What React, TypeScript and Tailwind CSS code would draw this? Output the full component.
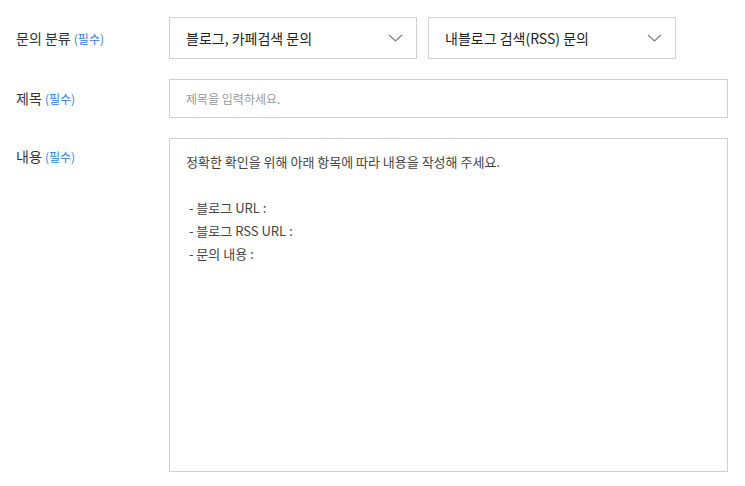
import { ReactNode } from "react";

const font = { fontFamily: '"Noto Sans CJK KR", "Noto Sans", sans-serif' };

function Label({ text, className = "" }: { text: string; className?: string }) {
    return (
        <div className={`w-[153px] shrink-0 text-[14px] text-[#333] ${className}`}>
            {text} <span className="text-[12px] text-[#2f7fe6]">(필수)</span>
        </div>
    );
}

function Chevron() {
    return (
        <svg width="15" height="8" viewBox="0 0 15 8" fill="none">
            <path d="M1 1l6.5 6L14 1" stroke="#7b7f86" strokeWidth="1.2" />
        </svg>
    );
}

function Select({ value }: { value: string }) {
    return (
        <div className="flex h-[42px] w-[248px] items-center justify-between border border-[#d0d0d0] pl-[16px] pr-[13px] text-[14px] text-[#222]">
            <span>{value}</span>
            <Chevron />
        </div>
    );
}

function Row({ children, className = "" }: { children: ReactNode; className?: string }) {
    return <div className={`flex ${className}`}>{children}</div>;
}

const body = `정확한 확인을 위해 아래 항목에 따라 내용을 작성해 주세요.

 - 블로그 URL :
 - 블로그 RSS URL :
 - 문의 내용 :`;

export default function App() {
    return (
        <main className="flex flex-col gap-[20px] bg-white pl-[16px] pt-[17px]" style={font}>
            <Row className="items-center">
                <Label text="문의 분류" />
                <div className="flex gap-[11px]">
                    <Select value="블로그, 카페검색 문의" />
                    <Select value="내블로그 검색(RSS) 문의" />
                </div>
            </Row>
            <Row className="items-center">
                <Label text="제목" />
                <div className="flex h-[39px] w-[559px] items-center border border-[#d0d0d0] px-[16px] text-[12px] text-[#999]">
                    제목을 입력하세요.
                </div>
            </Row>
            <Row>
                <Label text="내용" className="pt-[8px]" />
                <div className="h-[334px] w-[559px] whitespace-pre border border-[#d0d0d0] px-[16px] pt-[11px] text-[13px] leading-[23px] text-[#444]">
                    {body}
                </div>
            </Row>
        </main>
    );
}
